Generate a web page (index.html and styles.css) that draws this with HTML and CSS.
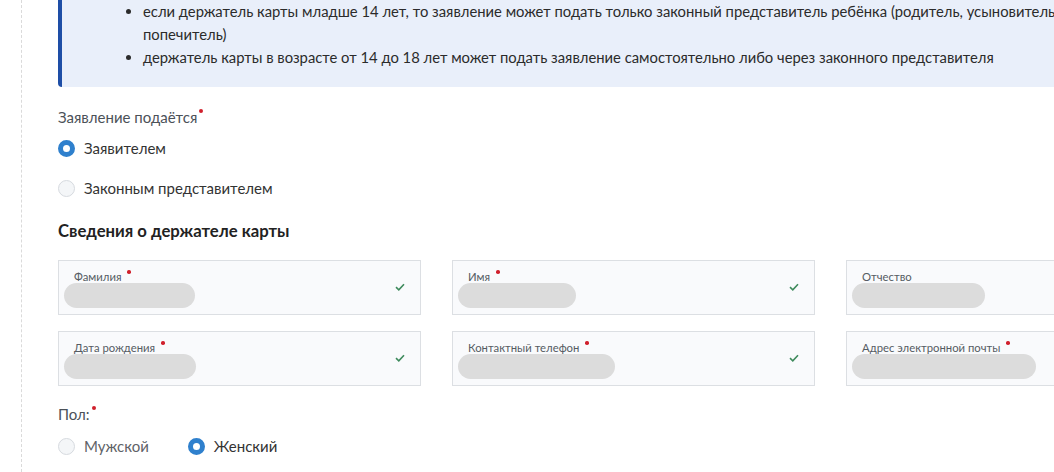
FILE: index.html
```html
<!DOCTYPE html>
<html lang="ru">
<head>
<meta charset="utf-8">
<link rel="stylesheet" href="styles.css">
</head>
<body>
<div class="page">
  <div class="column">
    <div class="info">
      <ul class="info-list">
        <li>если держатель карты младше 14 лет, то заявление может подать только законный представитель ребёнка (родитель, усыновитель, попечитель)</li>
        <li>держатель карты в возрасте от 14 до 18 лет может подать заявление самостоятельно либо через законного представителя</li>
      </ul>
    </div>

    <div class="group-label">Заявление подаётся<span class="req"></span></div>
    <div class="radio-col">
      <label class="radio"><span class="dot on"></span><span class="radio-text">Заявителем</span></label>
      <label class="radio"><span class="dot"></span><span class="radio-text">Законным представителем</span></label>
    </div>

    <h2 class="section-title">Сведения о держателе карты</h2>

    <div class="fields">
      <div class="field">
        <div class="field-label">Фамилия<span class="req sm"></span></div>
        <div class="pill" style="width:131px"></div>
        <svg class="check" viewBox="0 0 10 8" width="10" height="8"><path d="M1 4.2 L3.8 6.8 L9 1.2" fill="none" stroke="#3e8a5c" stroke-width="1.6"/></svg>
      </div>
      <div class="field">
        <div class="field-label">Имя<span class="req sm"></span></div>
        <div class="pill" style="width:118px"></div>
        <svg class="check" viewBox="0 0 10 8" width="10" height="8"><path d="M1 4.2 L3.8 6.8 L9 1.2" fill="none" stroke="#3e8a5c" stroke-width="1.6"/></svg>
      </div>
      <div class="field">
        <div class="field-label">Отчество</div>
        <div class="pill" style="width:133px"></div>
      </div>
      <div class="field">
        <div class="field-label">Дата рождения<span class="req sm"></span></div>
        <div class="pill" style="width:132px"></div>
        <svg class="check" viewBox="0 0 10 8" width="10" height="8"><path d="M1 4.2 L3.8 6.8 L9 1.2" fill="none" stroke="#3e8a5c" stroke-width="1.6"/></svg>
      </div>
      <div class="field">
        <div class="field-label">Контактный телефон<span class="req sm"></span></div>
        <div class="pill" style="width:157px"></div>
        <svg class="check" viewBox="0 0 10 8" width="10" height="8"><path d="M1 4.2 L3.8 6.8 L9 1.2" fill="none" stroke="#3e8a5c" stroke-width="1.6"/></svg>
      </div>
      <div class="field">
        <div class="field-label">Адрес электронной почты<span class="req sm"></span></div>
        <div class="pill" style="width:184px"></div>
      </div>
    </div>

    <div class="group-label gender">Пол:<span class="req"></span></div>
    <div class="radio-row">
      <label class="radio"><span class="dot"></span><span class="radio-text muted">Мужской</span></label>
      <label class="radio"><span class="dot on"></span><span class="radio-text">Женский</span></label>
    </div>
  </div>
</div>
</body>
</html>
```

FILE: styles.css
```css
html, body {
  margin: 0;
  padding: 0;
  background: #fff;
  overflow: hidden;
}
body {
  font-family: Lato, "Noto Sans", sans-serif;
  color: #333;
  width: 1054px;
  height: 472px;
}
.page {
  padding-left: 21px;
  height: 472px;
}
.column {
  border-left: 1px dashed #dadada;
  padding-left: 36px;
  width: 1151px;
  height: 472px;
}
.info {
  background: #e9effa;
  border-left: 4px solid #1e4ea6;
  border-bottom-left-radius: 4px;
  padding: 0 140px 18px 0;
}
.info-list {
  margin: 0;
  padding-left: 81px;
  font-size: 14.8px;
  line-height: 23px;
  color: #2b2b2b;
}
.group-label {
  margin-top: 20px;
  font-size: 15px;
  line-height: 20px;
  color: #4b5158;
}
.req {
  display: inline-block;
  width: 4px;
  height: 4px;
  border-radius: 50%;
  background: #d0202c;
  vertical-align: top;
  margin-left: 2px;
  margin-top: 2px;
}
.req.sm {
  margin-left: 6px;
  margin-top: 0;
  width: 3.5px;
  height: 3.5px;
}
.radio-col {
  display: flex;
  flex-direction: column;
  gap: 20px;
  margin-top: 11px;
}
.radio {
  display: flex;
  align-items: center;
  gap: 9px;
  height: 20px;
  font-size: 15px;
  color: #333;
}
.dot {
  box-sizing: border-box;
  width: 17px;
  height: 17px;
  border-radius: 50%;
  border: 1px solid #d6dadf;
  background: #f4f6f8;
  flex: none;
}
.dot.on {
  border: 5px solid #2f80cd;
  background: #fff;
}
.radio-text.muted {
  color: #5f6368;
}
.section-title {
  margin: 23px 0 0;
  font-size: 16.7px;
  line-height: 20px;
  font-weight: 700;
  color: #222;
}
.fields {
  display: grid;
  grid-template-columns: repeat(3, 363px);
  column-gap: 31px;
  row-gap: 16px;
  margin-top: 19px;
}
.field {
  position: relative;
  box-sizing: border-box;
  height: 55px;
  border: 1px solid #dcdfe3;
  background: #f9fafc;
  padding: 9px 0 0 5px;
}
.field-label {
  font-size: 11.3px;
  line-height: 13px;
  color: #555c63;
  padding-left: 10px;
}
.pill {
  height: 25px;
  border-radius: 13px;
  background: #dcdcdc;
  margin-top: 0;
}
.check {
  position: absolute;
  right: 15px;
  top: 22px;
}
.gender {
  margin-top: 18px;
}
.radio-row {
  display: flex;
  gap: 39px;
  margin-top: 12px;
}
```
